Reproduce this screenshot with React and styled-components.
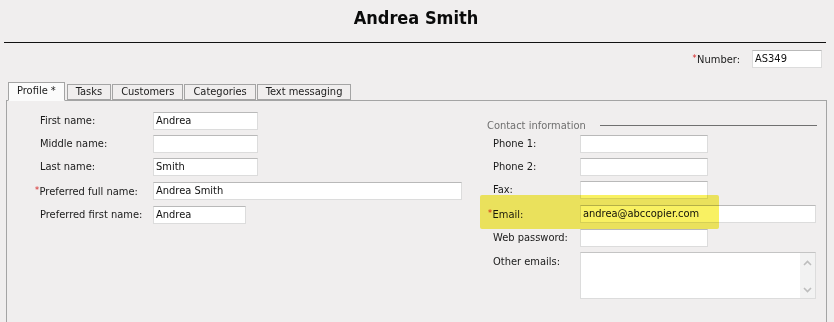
import React from "react";
import styled, { createGlobalStyle } from "styled-components";

const GlobalStyle = createGlobalStyle`
  html, body {
    margin: 0;
    padding: 0;
    overflow: hidden;
    background: #f0eeee;
  }
  body {
    font-family: "DejaVu Sans Condensed", "DejaVu Sans", "Liberation Sans", sans-serif;
    font-stretch: condensed;
    font-size: 11px;
    color: #1a1a1a;
  }
`;

const Page = styled.div`
  position: relative;
  width: 834px;
  min-height: 322px;
  background: #f0eeee;
  display: flex;
  flex-direction: column;
  & > * {
    flex-shrink: 0;
  }
`;

const Header = styled.div`
  margin: 0 8px 0 4px;
  height: 43px;
  border-bottom: 1px solid #111;
  display: flex;
  align-items: center;
  justify-content: center;
  box-sizing: border-box;
  h1 {
    margin: 0;
    font-size: 18px;
    font-weight: 700;
    color: #0a0a0a;
    padding-left: 2px;
    padding-bottom: 7px;
  }
`;

const NumberRow = styled.div`
  display: flex;
  justify-content: flex-end;
  align-items: center;
  gap: 12px;
  margin-top: 7px;
  padding-right: 12px;
`;

const Req = styled.span`
  color: #d42020;
  margin-left: -5px;
  font-size: 9px;
  vertical-align: 2px;
  padding-right: 0.5px;
`;

const Field = styled.div`
  width: ${(p) => p.$w}px;
  height: 18px;
  box-sizing: border-box;
  background: #fff;
  border: 1px solid #dcdcdc;
  border-top-color: #b9b9b9;
  padding: 0 2px;
  line-height: 16px;
  white-space: nowrap;
  overflow: hidden;
  color: #111;
  font-size: 11px;
`;

const TabBar = styled.div`
  display: flex;
  align-items: flex-end;
  gap: 1px;
  margin: 13px 0 0 8px;
  height: 19px;
  position: relative;
  z-index: 1;
`;

const Tab = styled.div`
  height: ${(p) => (p.$active ? "19px" : "16px")};
  box-sizing: border-box;
  padding: 0 8px;
  margin-right: ${(p) => (p.$active ? "1px" : "0")};
  border: 1px solid #a4a4a4;
  border-bottom: ${(p) => (p.$active ? "1px solid #fbfbfb" : "1px solid #a4a4a4")};
  margin-bottom: ${(p) => (p.$active ? "-1px" : "0")};
  background: ${(p) => (p.$active ? "#fbfbfb" : "#f0eeee")};
  line-height: ${(p) => (p.$active ? "15px" : "14px")};
  color: #1a1a1a;
  font-size: 11px;
`;

const Panel = styled.div`
  flex: 1 0 auto;
  margin: 0 7px 0 6px;
  border: 1px solid #a4a4a4;
  border-bottom: none;
  padding: 11px 9px 0 0;
  display: flex;
  flex-direction: column;
`;

const Columns = styled.div`
  display: flex;
`;

const Column = styled.div`
  display: flex;
  flex-direction: column;
  gap: 5px;
  width: ${(p) => p.$w}px;
  padding-left: ${(p) => p.$pad}px;
  box-sizing: border-box;
`;

const Row = styled.div`
  display: flex;
  align-items: ${(p) => (p.$top ? "flex-start" : "center")};
  padding-left: ${(p) => p.$indent || 0}px;
`;

const Label = styled.div`
  width: ${(p) => p.$w}px;
  flex-shrink: 0;
  line-height: 18px;
  padding-top: ${(p) => (p.$top ? "1px" : "0")};
  font-size: 11px;
`;

const SectionHead = styled.div`
  display: flex;
  align-items: center;
  height: 18px;
  margin-top: 4px;
  margin-bottom: -4px;
  color: #6f6f6f;
  font-size: 11px;
  span {
    white-space: nowrap;
  }
  &::after {
    content: "";
    flex: ${(p) => (p.$lineW ? "none" : "1")};
    width: ${(p) => p.$lineW || 0}px;
    height: 1px;
    background: #707070;
    margin-left: ${(p) => p.$gap}px;
  }
`;

const TextBox = styled.div`
  width: 236px;
  height: 47px;
  box-sizing: border-box;
  background: #fff;
  border: 1px solid #dcdcdc;
  border-top-color: #c4c4c4;
  display: flex;
  justify-content: flex-end;
`;

const ScrollBar = styled.div`
  width: 15px;
  background: #f2f2f2;
  display: flex;
  flex-direction: column;
  justify-content: space-between;
  align-items: center;
  padding: 7px 0 5px;
  svg {
    display: block;
  }
`;

const Highlight = styled.div`
  position: absolute;
  left: 480px;
  top: 195px;
  width: 239px;
  height: 34px;
  border-radius: 2px;
  background: #f9f162;
  mix-blend-mode: multiply;
  pointer-events: none;
  z-index: 2;
`;

const Bottom = styled.div`
  display: flex;
  margin-top: 17px;
`;

const Chevron = ({ up }) => (
  <svg width="9" height="6" viewBox="0 0 9 6">
    <path
      d={up ? "M1 5 L4.5 1.5 L8 5" : "M1 1 L4.5 4.5 L8 1"}
      fill="none"
      stroke="#bdbdbd"
      strokeWidth="1.6"
    />
  </svg>
);

const leftRows = [
  { label: "First name:", value: "Andrea", w: 105 },
  { label: "Middle name:", value: "", w: 105 },
  { label: "Last name:", value: "Smith", w: 105 },
  { label: "Preferred full name:", value: "Andrea Smith", w: 309, req: true },
  { label: "Preferred first name:", value: "Andrea", w: 93 },
];

const rightRows = [
  { label: "Phone 1:", value: "", w: 128 },
  { label: "Phone 2:", value: "", w: 128 },
  { label: "Fax:", value: "", w: 128 },
  { label: "Email:", value: "andrea@abccopier.com", w: 236, req: true },
  { label: "Web password:", value: "", w: 128 },
];

const tabs = ["Profile *", "Tasks", "Customers", "Categories", "Text messaging"];

const App = () => {
  return (
    <Page>
      <GlobalStyle />
      <Header>
        <h1>Andrea Smith</h1>
      </Header>
      <NumberRow>
        <span>
          <Req>*</Req>Number:
        </span>
        <Field $w={70}>AS349</Field>
      </NumberRow>
      <TabBar>
        {tabs.map((t, i) => (
          <Tab key={t} $active={i === 0}>
            {t}
          </Tab>
        ))}
      </TabBar>
      <Panel>
        <Columns>
          <Column $w={480} $pad={33}>
            {leftRows.map((r) => (
              <Row key={r.label}>
                <Label $w={113}>
                  {r.req && <Req>*</Req>}
                  {r.label}
                </Label>
                <Field $w={r.w}>{r.value}</Field>
              </Row>
            ))}
          </Column>
          <Column $w={330} $pad={0}>
            <SectionHead $gap={14}>
              <span>Contact information</span>
            </SectionHead>
            {rightRows.map((r) => (
              <Row key={r.label} $indent={6}>
                <Label $w={87}>
                  {r.req && <Req>*</Req>}
                  {r.label}
                </Label>
                <Field $w={r.w}>{r.value}</Field>
              </Row>
            ))}
            <Row $top $indent={6}>
              <Label $w={87} $top>
                Other emails:
              </Label>
              <TextBox>
                <ScrollBar>
                  <Chevron up />
                  <Chevron />
                </ScrollBar>
              </TextBox>
            </Row>
          </Column>
        </Columns>
        <Bottom>
          <Column $w={480} $pad={28}>
            <SectionHead $gap={14} $lineW={340}>
              <span>Address</span>
            </SectionHead>
          </Column>
          <Column $w={330} $pad={6}>
            <Label $w={300} style={{ marginTop: 4 }}>
              <Req>*</Req>Preferred contact method:
            </Label>
          </Column>
        </Bottom>
      </Panel>
      <Highlight />
    </Page>
  );
};

export default App;
